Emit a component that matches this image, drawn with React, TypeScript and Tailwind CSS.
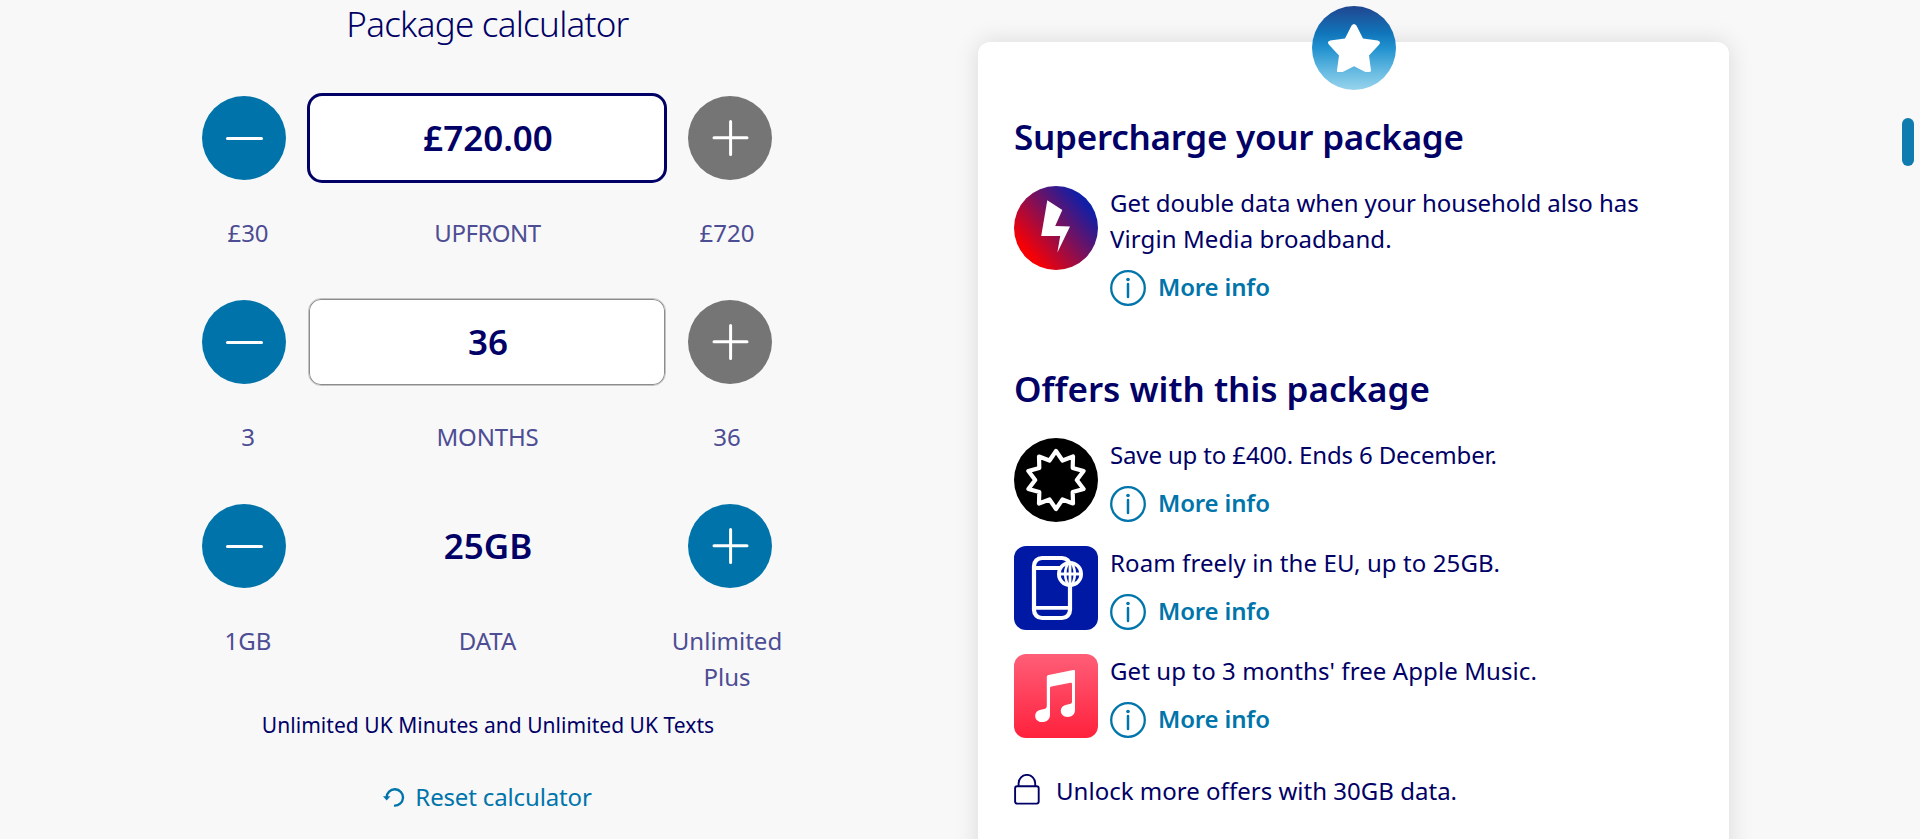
import React, { ReactNode } from "react";

function StepButton({ kind, disabled = false }: { kind: "minus" | "plus"; disabled?: boolean }) {
  return (
    <button
      aria-label={kind === "minus" ? "Decrease" : "Increase"}
      className={`size-[84px] shrink-0 rounded-full ${disabled ? "bg-[#757575]" : "bg-[#0074aa]"}`}
    >
      <svg viewBox="0 0 84 84" className="size-[84px]" stroke="#fff" strokeWidth="3" strokeLinecap="round" fill="none">
        {kind === "minus" ? <path d="M25.5 42.5H59.5" /> : <path d="M26 41.8H59M42.6 25.5V58.5" />}
      </svg>
    </button>
  );
}

interface StepperProps {
  value: string;
  boxClass: string;
  min: string;
  label: string;
  max: ReactNode;
  maxed?: boolean;
  labelClass?: string;
}

function Stepper({ value, boxClass, min, label, max, maxed = false, labelClass = "" }: StepperProps) {
  return (
    <section>
      <div className="flex h-[90px] items-center gap-[21px] pl-[14px]">
        <StepButton kind="minus" />
        <div className="flex h-[90px] w-[360px] items-center justify-center">
          <div
            className={`flex items-center justify-center pb-px pl-0.5 text-[35px] leading-[48px] font-semibold ${boxClass}`}
          >
            {value}
          </div>
        </div>
        <StepButton kind="plus" disabled={maxed} />
      </div>
      <div className="mt-8 grid grid-cols-[120px_359px_120px] text-center text-2xl leading-9 text-[#4d4d94]">
        <span>{min}</span>
        <span className={labelClass}>{label}</span>
        <span>{max}</span>
      </div>
    </section>
  );
}

function InfoIcon() {
  return (
    <svg viewBox="0 0 36 36" className="size-9 shrink-0" fill="none" stroke="currentColor">
      <circle cx="18" cy="18" r="16.8" strokeWidth="2.3" />
      <path d="M18 14V27" strokeWidth="2.5" strokeLinecap="round" />
      <circle cx="18" cy="9.5" r="1.8" fill="currentColor" stroke="none" />
    </svg>
  );
}

function Offer({ icon, textClass = "", children }: { icon: ReactNode; textClass?: string; children: ReactNode }) {
  return (
    <div className="flex gap-3">
      <div className="size-[84px] shrink-0">{icon}</div>
      <div className="text-2xl">
        <p className={`-mt-px leading-9 ${textClass}`}>{children}</p>
        <a className="mt-[13px] flex gap-3 leading-[34px] font-semibold tracking-[-0.15px] text-[#0075ab]">
          <InfoIcon />
          <span>More info</span>
        </a>
      </div>
    </div>
  );
}

function StarBadge() {
  return (
    <svg viewBox="0 0 84 84" className="size-[84px]">
      <defs>
        <linearGradient id="star" x1="0" y1="0" x2="0" y2="1">
          <stop offset="0" stopColor="#20468f" />
          <stop offset="0.33" stopColor="#1176bb" />
          <stop offset="0.5" stopColor="#2191cf" />
          <stop offset="0.8" stopColor="#6bbde3" />
          <stop offset="1" stopColor="#97d3ec" />
        </linearGradient>
      </defs>
      <circle cx="42" cy="42" r="42" fill="url(#star)" />
      <path
        fill="#fff"
        d="M39.6 19.6Q42 16.2 44.4 19.6L51 32.4L65.8 34.6Q69.6 35.8 67 38.8L57 49.4L59 64.6Q59 66 57.6 66H53.4L42 60.2L30.6 66H25.2Q24.9 66 25 64.6L27 49.4L17 38.8Q14.4 35.8 18.2 34.6L33 32.4Z"
      />
    </svg>
  );
}

function BoltIcon() {
  return (
    <svg viewBox="0 0 84 84" className="size-[84px]">
      <defs>
        <linearGradient id="bolt" x1="0.17" y1="0.79" x2="0.86" y2="0.2">
          <stop offset="0" stopColor="#f60005" />
          <stop offset="1" stopColor="#0e1fa8" />
        </linearGradient>
      </defs>
      <circle cx="42" cy="42" r="42" fill="url(#bolt)" />
      <path fill="#fff" d="M33.3 14.3L48.3 23.9L41.2 40L56 40.6L43.4 66.5L46.2 50H27.2Z" />
    </svg>
  );
}

function BurstIcon() {
  return (
    <svg viewBox="0 0 84 84" className="size-[84px]">
      <circle cx="42" cy="42" r="42" fill="#000" />
      <path
        fill="none"
        stroke="#fff"
        strokeWidth="4.2"
        strokeLinejoin="round"
        d="M42 13L48.5 22.5L59 18.5L58.7 29.9L69.6 33L62.8 42L69.6 51L58.7 54.1L59 65.5L48.5 61.5L42 71L35.5 61.5L25 65.5L25.3 54.1L14.4 51L21.2 42L14.4 33L25.3 29.9L25 18.5L35.5 22.5Z"
      />
    </svg>
  );
}

function RoamIcon() {
  return (
    <svg viewBox="0 0 84 84" className="size-[84px]" fill="none" stroke="#fff">
      <rect width="84" height="84" rx="12" fill="#0019a5" stroke="none" />
      <rect x="20" y="12" width="36" height="60" rx="8" strokeWidth="4.2" />
      <path d="M20 22H50M20 61.8H56" strokeWidth="3.8" />
      <circle cx="56" cy="28" r="11.2" fill="#0019a5" strokeWidth="3.6" />
      <ellipse cx="56" cy="28" rx="4.8" ry="11" strokeWidth="2.6" />
      <path d="M45 28H67M56 17V39" strokeWidth="2.8" />
    </svg>
  );
}

function MusicIcon() {
  return (
    <svg viewBox="0 0 84 84" className="size-[84px]">
      <defs>
        <linearGradient id="music" x1="0" y1="0" x2="0" y2="1">
          <stop offset="0" stopColor="#ff5e78" />
          <stop offset="1" stopColor="#ff213c" />
        </linearGradient>
      </defs>
      <rect width="84" height="84" rx="12" fill="url(#music)" />
      <path
        fill="#fff"
        d="M61 17.2V55.5C61 60.2 58.2 63 53.6 63C49.6 63 46.8 60.4 46.8 56.8C46.8 53.4 49 51.4 52.6 50.7L55.6 50.1C57.3 49.7 58 49 58 47.2V30C58 28.9 57.3 28.5 56.4 28.7L37.4 32.5C36.4 32.7 36 33.3 36 34.3V60.4C36 65.2 33 68 28.2 68C24 68 21.2 65.4 21.2 61.9C21.2 58.5 23.4 56.3 27 55.7L30 55.1C31.9 54.7 32.8 53.9 32.8 51.8V23.2C32.8 22 33.4 21.3 34.6 21.1L59.2 16.1C60.4 15.8 61 16.2 61 17.2Z"
      />
    </svg>
  );
}

export default function App() {
  return (
    <main className="relative flex h-[839px] w-[1920px] overflow-hidden bg-[#f8f8f8] font-['Noto_Sans',sans-serif] text-[#000066]">
      <div className="flex w-[976px] flex-col items-center">
        <h2 className="mt-px mr-px text-[35px] leading-[45px] font-[350] tracking-[-0.75px]">Package calculator</h2>
        <div className="mt-[47px] flex w-[600px] flex-col gap-[46px]">
          <Stepper
            value="£720.00"
            boxClass="h-[90px] w-[360px] rounded-[15px] border-[3px] border-[#000066] bg-white"
            min="£30"
            label="UPFRONT"
            labelClass="tracking-[-0.5px]"
            max="£720"
            maxed
          />
          <Stepper
            value="36"
            boxClass="h-[88px] w-[358px] rounded-[13px] border border-[#c4c4c4] bg-white inset-ring inset-ring-[#8c8c8c]"
            min="3"
            label="MONTHS"
            labelClass="tracking-[-0.15px]"
            max="36"
            maxed
          />
          <Stepper value="25GB" boxClass="" min="1GB" label="DATA" max="Unlimited Plus" />
        </div>
        <p className="mt-3.5 text-[21px] leading-8 tracking-[0.04px]">Unlimited UK Minutes and Unlimited UK Texts</p>
        <a className="mt-[38px] mr-px flex items-center gap-2.5 text-2xl leading-9 tracking-[-0.15px] text-[#0075ab]">
          <svg viewBox="0 0 22 19" className="h-[19px] w-[22px]" fill="none" stroke="currentColor" strokeWidth="2.4">
            <path d="M3.6 9.4A8.2 8.2 0 1 1 11 17.6" />
            <path d="M0 8.2H7.4L3.7 12.4Z" fill="currentColor" stroke="none" />
          </svg>
          Reset calculator
        </a>
      </div>

      <aside className="relative mt-[42px] ml-0.5 h-[860px] w-[751px] rounded-xl bg-white px-9 pt-[71px] shadow-[0_0_24px_rgba(0,0,0,0.13)]">
        <div className="absolute -top-9 left-[334px]">
          <StarBadge />
        </div>
        <h3 className="text-[35px] leading-[48px] font-semibold tracking-[-0.26px]">Supercharge your package</h3>
        <div className="mt-[25px]">
          <Offer icon={<BoltIcon />} textClass="w-[560px] tracking-[-0.05px]">
            Get double data when your household also has{" "}
            <span className="tracking-[0.1px]">Virgin Media broadband.</span>
          </Offer>
        </div>
        <h3 className="mt-[59px] text-[35px] leading-[48px] font-semibold tracking-[-0.02px]">
          Offers with this package
        </h3>
        <div className="mt-[25px] flex flex-col gap-6">
          <Offer icon={<BurstIcon />} textClass="tracking-[-0.14px]">Save up to £400. Ends 6 December.</Offer>
          <Offer icon={<RoamIcon />} textClass="tracking-[0.1px]">Roam freely in the EU, up to 25GB.</Offer>
          <Offer icon={<MusicIcon />} textClass="tracking-[0.09px]">Get up to 3 months' free Apple Music.</Offer>
        </div>
        <p className="mt-[35px] flex gap-4 text-2xl leading-9 tracking-[0.02px]">
          <svg viewBox="0 0 26 31" className="mt-px h-[31px] w-[26px]" fill="none" stroke="currentColor" strokeWidth="1.9">
            <rect x="1.1" y="12.2" width="23.6" height="17.4" rx="2" />
            <path d="M4.6 12V9.2A8.3 8.3 0 0 1 21.2 9.2V12" />
          </svg>
          Unlock more offers with 30GB data.
        </p>
      </aside>

      <div className="absolute top-[118px] right-1.5 h-12 w-3 rounded-full bg-[#0f7bae]" />
    </main>
  );
}
